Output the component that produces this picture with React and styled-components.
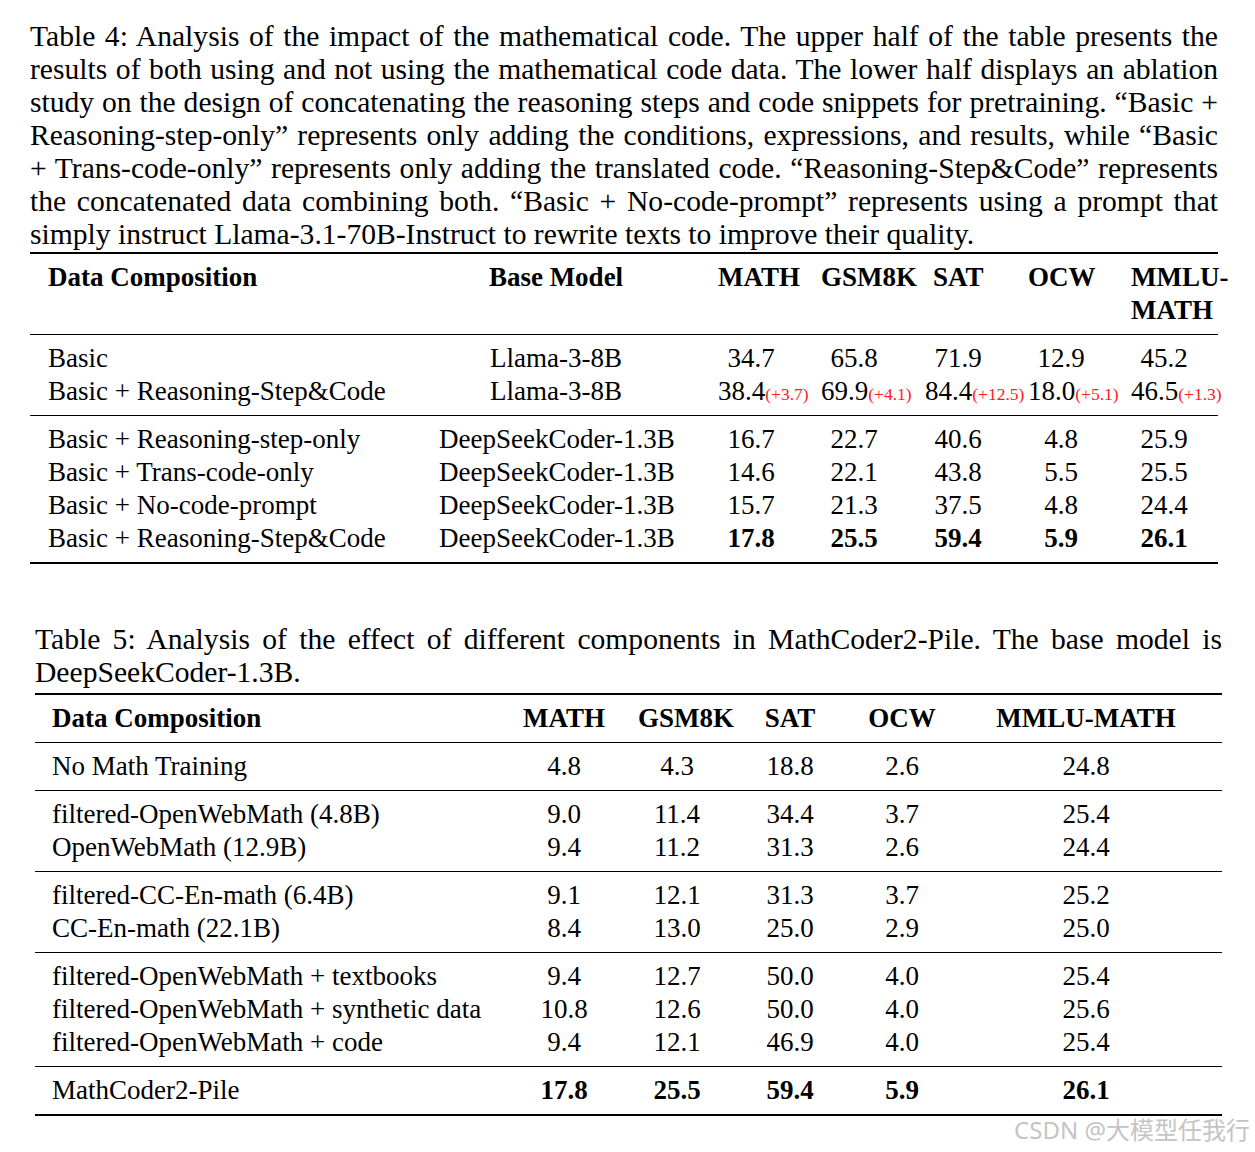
import React from 'react';
import styled, { createGlobalStyle } from 'styled-components';

const GlobalStyle = createGlobalStyle`
  html, body { margin: 0; padding: 0; background: #ffffff; }
  body { font-family: "Liberation Serif", "Times New Roman", serif; color: #000; }
`;

const Page = styled.div`
  position: relative;
  width: 1255px;
  height: 1152px;
  overflow: hidden;
  box-sizing: border-box;
  padding-top: 20px;
`;

const Block = styled.section`
  margin-left: ${(p) => p.$left}px;
  width: ${(p) => p.$width}px;
  margin-top: ${(p) => p.$top || 0}px;
`;

const Caption = styled.div`
  font-size: 29.6px;
  line-height: 33px;
`;

const CaptionLine = styled.div`
  text-align: justify;
  text-align-last: ${(p) => (p.$last ? 'left' : 'justify')};
  word-spacing: ${(p) => (p.$last ? '0' : '-1.5px')};
`;

const Table = styled.div`
  display: flex;
  flex-direction: column;
  border-top: 2px solid #000;
  border-bottom: 2px solid #000;
  font-size: 27px;
  line-height: 33px;
`;

const Group = styled.div`
  display: grid;
  grid-template-columns: ${(p) => p.$cols};
  padding: 7px 0;
  & + & {
    border-top: 1px solid #000;
  }
`;

const Cell = styled.div`
  white-space: nowrap;
  font-weight: ${(p) => (p.$bold ? 700 : 400)};
  text-align: ${(p) => p.$align || 'left'};
  padding-left: ${(p) => p.$pl || 0}px;
  padding-right: ${(p) => p.$pr || 0}px;
`;

const NumBox = styled.div`
  width: 66px;
  height: 33px;
  white-space: nowrap;
  text-align: ${(p) => (p.$delta ? 'left' : 'center')};
  font-weight: ${(p) => (p.$bold ? 700 : 400)};
`;

const Delta = styled.span`
  font-size: 17.5px;
  line-height: 1;
  color: #ff1a1a;
`;

const Watermark = styled.div`
  position: absolute;
  right: 5px;
  top: 1114px;
  font-family: "Noto Sans", "Noto Sans CJK SC", sans-serif;
  font-size: 24px;
  line-height: 32px;
  color: #c4c4c4;
  white-space: nowrap;
`;

const cap4 = [
  'Table 4:  Analysis of the impact of the mathematical code.  The upper half of the table presents the',
  'results of both using and not using the mathematical code data. The lower half displays an ablation',
  'study on the design of concatenating the reasoning steps and code snippets for pretraining. \u201cBasic +',
  'Reasoning-step-only\u201d represents only adding the conditions, expressions, and results, while \u201cBasic',
  '+ Trans-code-only\u201d represents only adding the translated code. \u201cReasoning-Step&Code\u201d represents',
  'the concatenated data combining both.  \u201cBasic + No-code-prompt\u201d represents using a prompt that',
  'simply instruct Llama-3.1-70B-Instruct to rewrite texts to improve their quality.',
];

const cap5 = [
  'Table 5:  Analysis of the effect of different components in MathCoder2-Pile.  The base model is',
  'DeepSeekCoder-1.3B.',
];

const T4_COLS = '409px 279px 103px 104px 103px 103px 87px';
const T5_COLS = '475px 108px 118px 108px 116px 262px';

const t4Upper = [
  { name: 'Basic', model: 'Llama-3-8B', vals: ['34.7', '65.8', '71.9', '12.9', '45.2'] },
  {
    name: 'Basic + Reasoning-Step&Code',
    model: 'Llama-3-8B',
    vals: ['38.4', '69.9', '84.4', '18.0', '46.5'],
    deltas: ['(+3.7)', '(+4.1)', '(+12.5)', '(+5.1)', '(+1.3)'],
  },
];

const t4Lower = [
  { name: 'Basic + Reasoning-step-only', vals: ['16.7', '22.7', '40.6', '4.8', '25.9'] },
  { name: 'Basic + Trans-code-only', vals: ['14.6', '22.1', '43.8', '5.5', '25.5'] },
  { name: 'Basic + No-code-prompt', vals: ['15.7', '21.3', '37.5', '4.8', '24.4'] },
  { name: 'Basic + Reasoning-Step&Code', vals: ['17.8', '25.5', '59.4', '5.9', '26.1'], bold: true },
];

const t5Groups = [
  [{ name: 'No Math Training', vals: ['4.8', '4.3', '18.8', '2.6', '24.8'] }],
  [
    { name: 'filtered-OpenWebMath (4.8B)', vals: ['9.0', '11.4', '34.4', '3.7', '25.4'] },
    { name: 'OpenWebMath (12.9B)', vals: ['9.4', '11.2', '31.3', '2.6', '24.4'] },
  ],
  [
    { name: 'filtered-CC-En-math (6.4B)', vals: ['9.1', '12.1', '31.3', '3.7', '25.2'] },
    { name: 'CC-En-math (22.1B)', vals: ['8.4', '13.0', '25.0', '2.9', '25.0'] },
  ],
  [
    { name: 'filtered-OpenWebMath + textbooks', vals: ['9.4', '12.7', '50.0', '4.0', '25.4'] },
    { name: 'filtered-OpenWebMath + synthetic data', vals: ['10.8', '12.6', '50.0', '4.0', '25.6'] },
    { name: 'filtered-OpenWebMath + code', vals: ['9.4', '12.1', '46.9', '4.0', '25.4'] },
  ],
  [{ name: 'MathCoder2-Pile', vals: ['17.8', '25.5', '59.4', '5.9', '26.1'], bold: true }],
];

function T4Row({ row, model }) {
  return (
    <>
      <Cell $pl={18}>{row.name}</Cell>
      <Cell $align="center" $pr={45}>{model}</Cell>
      {row.vals.map((v, i) => (
        <Cell key={i}>
          <NumBox $bold={row.bold} $delta={!!row.deltas}>
            {v}
            {row.deltas && <Delta>{row.deltas[i]}</Delta>}
          </NumBox>
        </Cell>
      ))}
    </>
  );
}

function Table4() {
  return (
    <Table>
      <Group $cols={T4_COLS}>
        <Cell $bold $pl={18}>Data Composition</Cell>
        <Cell $bold $align="center" $pr={45}>Base Model</Cell>
        <Cell $bold>MATH</Cell>
        <Cell $bold>GSM8K</Cell>
        <Cell $bold $pl={8}>SAT</Cell>
        <Cell $bold>OCW</Cell>
        <Cell $bold>
          MMLU-
          <br />
          MATH
        </Cell>
      </Group>
      <Group $cols={T4_COLS}>
        {t4Upper.map((r, i) => (
          <T4Row key={i} row={r} model={r.model} />
        ))}
      </Group>
      <Group $cols={T4_COLS}>
        {t4Lower.map((r, i) => (
          <T4Row key={i} row={r} model="DeepSeekCoder-1.3B" />
        ))}
      </Group>
    </Table>
  );
}

function Table5() {
  return (
    <Table>
      <Group $cols={T5_COLS}>
        <Cell $bold $pl={17}>Data Composition</Cell>
        <Cell $bold $align="center">MATH</Cell>
        <Cell $bold $align="center" $pl={18}>GSM8K</Cell>
        <Cell $bold $align="center">SAT</Cell>
        <Cell $bold $align="center">OCW</Cell>
        <Cell $bold $align="center" $pr={10}>MMLU-MATH</Cell>
      </Group>
      {t5Groups.map((g, gi) => (
        <Group key={gi} $cols={T5_COLS}>
          {g.map((r, ri) => (
            <React.Fragment key={ri}>
              <Cell $pl={17}>{r.name}</Cell>
              {r.vals.map((v, i) => (
                <Cell key={i} $align="center" $bold={r.bold} $pr={i === 4 ? 10 : 0}>
                  {v}
                </Cell>
              ))}
            </React.Fragment>
          ))}
        </Group>
      ))}
    </Table>
  );
}

export default function App() {
  return (
    <Page>
      <GlobalStyle />
      <Block $left={30} $width={1188}>
        <Caption>
          {cap4.map((l, i) => (
            <CaptionLine key={i} $last={i === cap4.length - 1}>
              {l}
            </CaptionLine>
          ))}
        </Caption>
      </Block>
      <Block $left={30} $width={1188} $top={1}>
        <Table4 />
      </Block>
      <Block $left={35} $width={1187} $top={59}>
        <Caption>
          {cap5.map((l, i) => (
            <CaptionLine key={i} $last={i === cap5.length - 1}>
              {l}
            </CaptionLine>
          ))}
        </Caption>
      </Block>
      <Block $left={35} $width={1187} $top={4}>
        <Table5 />
      </Block>
      <Watermark>CSDN @大模型任我行</Watermark>
    </Page>
  );
}
